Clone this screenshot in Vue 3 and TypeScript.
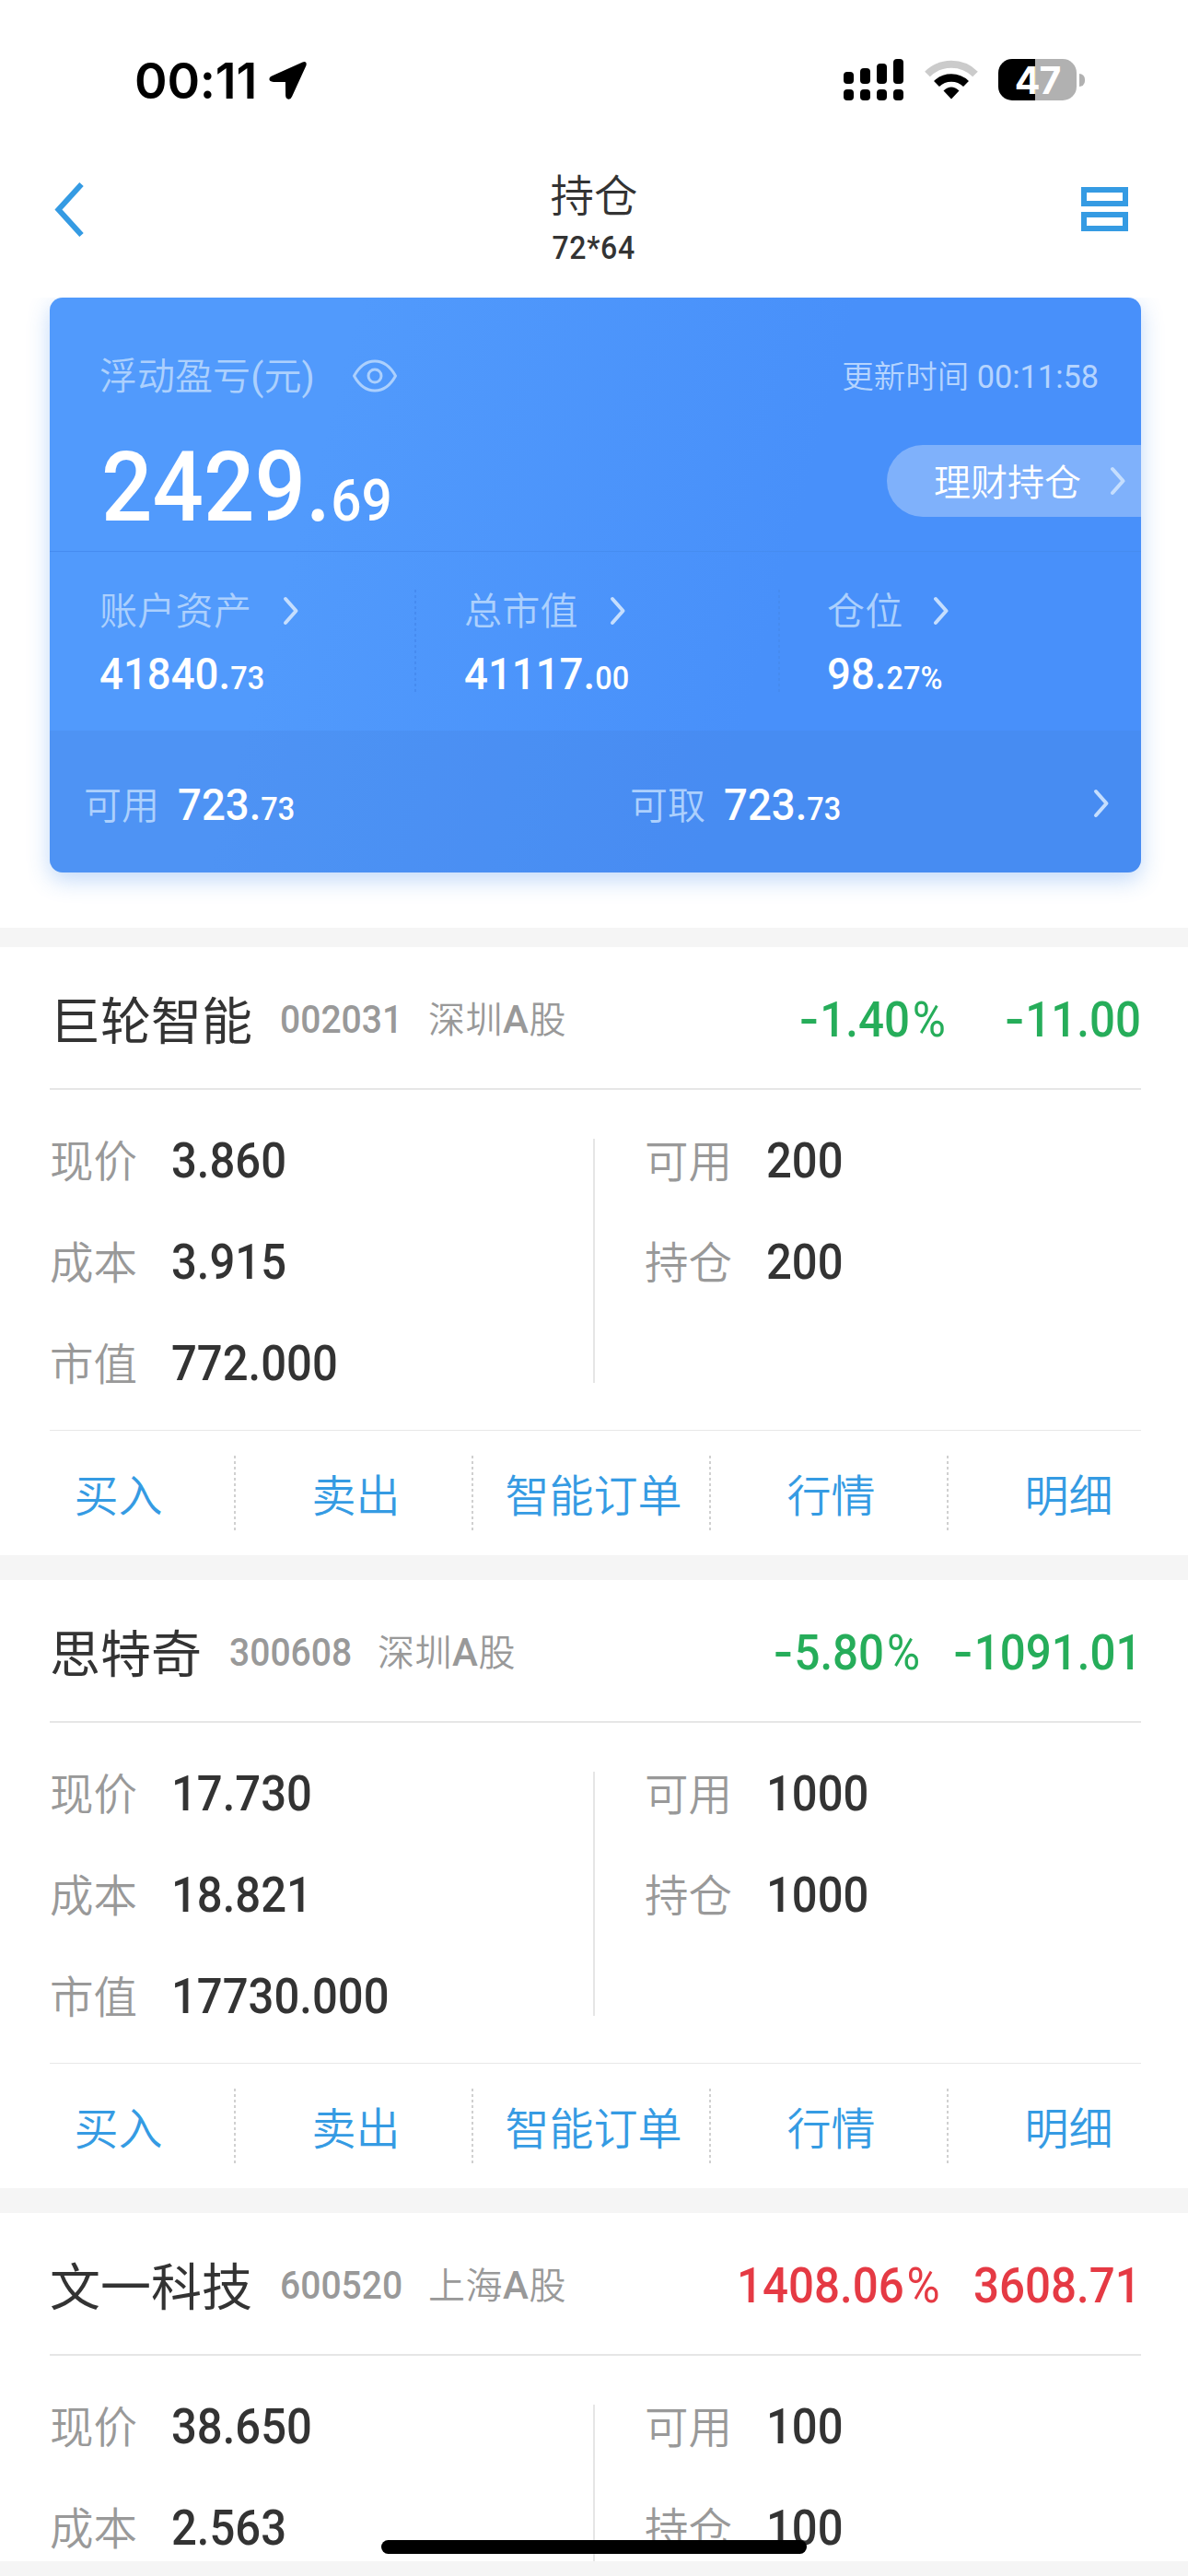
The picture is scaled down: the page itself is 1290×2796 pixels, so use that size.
<script setup lang="ts">
interface Stat { label: string; whole: string; fraction: string }
interface Field { label: string; value: string }
interface Holding {
  name: string
  code: string
  market: string
  sign: string
  percent: string
  amount: string
  trend: 'up' | 'down'
  left: Field[]
  right: Field[]
  clipped?: boolean
}

const stats: Stat[] = [
  { label: '账户资产', whole: '41840.', fraction: '73' },
  { label: '总市值', whole: '41117.', fraction: '00' },
  { label: '仓位', whole: '98.', fraction: '27%' },
]

const actions: string[] = ['买入', '卖出', '智能订单', '行情', '明细']

function fields(price: string, cost: string, value?: string): Field[] {
  const list: Field[] = [
    { label: '现价', value: price },
    { label: '成本', value: cost },
  ]
  if (value) list.push({ label: '市值', value })
  return list
}

function amounts(count: string): Field[] {
  return [
    { label: '可用', value: count },
    { label: '持仓', value: count },
  ]
}

const holdings: Holding[] = [
  { name: '巨轮智能', code: '002031', market: '深圳', sign: '-', percent: '1.40', amount: '11.00', trend: 'down', left: fields('3.860', '3.915', '772.000'), right: amounts('200') },
  { name: '思特奇', code: '300608', market: '深圳', sign: '-', percent: '5.80', amount: '1091.01', trend: 'down', left: fields('17.730', '18.821', '17730.000'), right: amounts('1000') },
  { name: '文一科技', code: '600520', market: '上海', sign: '', percent: '1408.06', amount: '3608.71', trend: 'up', left: fields('38.650', '2.563'), right: amounts('100'), clipped: true },
]
</script>

<template>
  <div class="screen">
    <div class="status">
      <div class="clock">
        <span>00:11</span>
        <svg width="44" height="44" viewBox="0 0 44 44"><path d="M38 3.500 4.500 18.500 Q1.500 20 3 22 Q4 22.800 6 22.800 L20 23 20.200 38.500 Q20.300 41.500 22.500 41.600 24.200 41.500 25.200 39 L40.500 5.500 Q41.300 2.200 38 3.500Z" fill="#000" stroke="#000" stroke-width="2.200" stroke-linejoin="round" /></svg>
      </div>
      <div class="indicators">
        <svg width="66" height="46" viewBox="0 0 66 46">
          <rect x="0" y="14" width="11" height="13" rx="4" /><rect x="18" y="10" width="11" height="17" rx="4" />
          <rect x="36" y="5" width="11" height="22" rx="4" /><rect x="54" y="0" width="11" height="27" rx="4" />
          <rect v-for="i in 4" :key="i" :x="(i - 1) * 18" y="33" width="11" height="12" rx="4" />
        </svg>
        <svg class="wifi" width="58" height="44" viewBox="0 0 58 44">
          <path d="M3 15.500 A37 37 0 0 1 55 15.500" fill="none" stroke="#cbcbcb" stroke-width="8" />
          <path d="M13 26 A23 23 0 0 1 45 26" fill="none" stroke="#000" stroke-width="8.500" />
          <path d="M20.500 33.500 Q29 25.500 37.500 33.500 L29 42.500Z" />
        </svg>
        <div class="battery"><span>47</span></div>
        <div class="nub"></div>
      </div>
    </div>

    <header class="nav">
      <svg class="back" width="40" height="60" viewBox="0 0 40 60"><path d="M32.500 4 7.500 31.500 32.500 59" transform="translate(0 -1)" fill="none" stroke="#359be3" stroke-width="6" /></svg>
      <div class="heading">
        <div class="title">持仓</div>
        <div class="account"><span class="num">72*64</span></div>
      </div>
      <svg class="list" width="51" height="49" viewBox="0 0 51 49" fill="none" stroke="#359be3" stroke-width="6"><rect x="3" y="3" width="45" height="15" /><rect x="3" y="30" width="45" height="15" /></svg>
    </header>

    <section class="card">
      <div class="top">
        <div class="line">
          <span class="label pnl">浮动盈亏<i>(</i>元<i>)</i></span>
          <svg class="eye" width="50" height="38" viewBox="0 0 50 38" fill="none" stroke="#acd0fd" stroke-width="3"><path d="M2.500 19 C8 9 16 3 25 3 S42 9 47.500 19 C42 29 34 35 25 35 S8 29 2.500 19Z" /><circle cx="25" cy="19" r="7" /></svg>
          <span class="updated">更新时间 <span class="clock-value">00:11:58</span></span>
        </div>
        <div class="total">
          <span class="num big">2429.<small>69</small></span>
          <div class="pill">
            <span>理财持仓</span>
            <svg width="20" height="32" viewBox="0 0 20 32"><path d="M4 3 15.500 16 4 29" /></svg>
          </div>
        </div>
      </div>
      <div class="stats">
        <div v-for="s in stats" :key="s.label" class="stat">
          <div class="label">{{ s.label }}<svg width="20" height="32" viewBox="0 0 20 32"><path d="M4 3 15.500 16 4 29" /></svg></div>
          <div class="value"><span class="num">{{ s.whole }}<small>{{ s.fraction }}</small></span></div>
        </div>
      </div>
      <div class="cash">
        <div v-for="l in ['可用', '可取']" :key="l" class="cash-item"><span class="label">{{ l }}</span><span class="value num">723.<small>73</small></span></div>
        <svg width="20" height="32" viewBox="0 0 20 32"><path d="M4 3 15.500 16 4 29" /></svg>
      </div>
    </section>

    <article v-for="h in holdings" :key="h.code" class="holding" :class="{ clipped: h.clipped }">
      <div class="head">
        <span class="name">{{ h.name }}</span>
        <span class="code"><span class="num">{{ h.code }}</span></span>
        <span class="market">{{ h.market }}<b>A</b>股</span>
        <div class="profit num" :class="h.trend">
          <span><span v-if="h.sign" class="sign">{{ h.sign }}</span>{{ h.percent }}<span class="pct">%</span></span>
          <span class="amount"><span v-if="h.sign" class="sign">{{ h.sign }}</span>{{ h.amount }}</span>
        </div>
      </div>
      <div class="body">
        <div class="col">
          <div v-for="f in h.left" :key="f.label" class="field"><span class="key">{{ f.label }}</span><span class="num">{{ f.value }}</span></div>
        </div>
        <div class="col second">
          <div v-for="f in h.right" :key="f.label" class="field"><span class="key">{{ f.label }}</span><span class="num">{{ f.value }}</span></div>
        </div>
      </div>
      <div v-if="!h.clipped" class="actions"><span v-for="a in actions" :key="a">{{ a }}</span></div>
    </article>
    <div class="home-bar"></div>
  </div>
</template>

<style>
html, body { margin: 0; background: #f5f5f5; overflow: hidden; }
</style>

<style scoped>
.screen { position: relative; width: 1290px; height: 2796px; overflow: hidden; background: #f5f5f5; color: #333; font-family: Roboto, "Noto Sans CJK SC", sans-serif; font-weight: 350; }
.screen * { box-sizing: border-box; }
svg { display: block; flex: none; }
.num { display: inline-block; font-weight: 500; transform: scaleX(.93); transform-origin: left center; white-space: nowrap; }

.status { height: 175px; display: flex; justify-content: space-between; background: #fff; padding: 64px 112px 0 146px; color: #000; }
.clock { display: flex; height: 46px; align-items: center; font: 600 54px/46px Inter, sans-serif; letter-spacing: -.2px; gap: 12px; }
.clock span { padding-top: 1px; }
.indicators { display: flex; height: 45px; align-items: center; }
.wifi { margin: 0 22px 0 22px; }
.battery { width: 85px; height: 45px; border-radius: 15px; background: linear-gradient(90deg, #000 40px, #b1b1b1 40px); color: #fff; font: 700 41px/46px Inter, sans-serif; text-align: center; letter-spacing: -1px; }
.nub { width: 6px; height: 14px; margin-left: 3px; border-radius: 0 7px 7px 0; background: #b1b1b1; }

.nav { height: 148px; background: #fff; display: flex; justify-content: space-between; padding: 0 65px 0 56px; }
.back { margin-top: 22px; }
.list { margin-top: 28px; }
.heading { width: 200px; margin-left: 20px; text-align: center; }
.title { font-size: 47.500px; line-height: 79px; }
.account { font-size: 34.500px; line-height: 30px; }
.account .num { transform-origin: center; letter-spacing: .7px; }

.card { margin: 0 51px 0 54px; height: 624px; border-radius: 14px; background: linear-gradient(105deg, #519afc 25%, #4890fa 65%); color: #fff; position: relative; z-index: 1; box-shadow: 0 8px 24px rgba(50, 130, 235, .3), 0 0 0 120px #fff; clip-path: inset(0 -60px -60px -60px); }
.label { color: #acd0fd; font-size: 41px; line-height: 60px; }
.card svg path { fill: none; stroke: #c5defe; stroke-width: 4; stroke-linecap: round; stroke-linejoin: round; }
.card .eye path { stroke: #acd0fd; stroke-width: 3; }
.top { height: 276px; padding-top: 56px; border-bottom: 1px solid #468cf0; }
.line { display: flex; height: 60px; align-items: center; padding: 0 46px 0 54px; }
.pnl i { font-style: normal; font-weight: 400; display: inline-block; width: 14.500px; text-align: center; }
.eye { margin: -2px 0 0 40px; }
.updated { margin-left: auto; font-size: 34.500px; color: #b5d4fe; line-height: 60px; }
.clock-value { font-size: 34.300px; font-weight: 400; }
.total { display: flex; justify-content: space-between; }
.big { margin: 26px 0 -26px 56px; font-size: 105px; line-height: 130px; }
.big small { font-size: 63px; }
.pill { width: 276px; height: 78px; margin-top: 44px; padding: 0 15px 0 51px; border-radius: 39px 0 0 39px; background: rgba(255, 255, 255, .3); display: flex; align-items: center; justify-content: space-between; font-size: 40px; line-height: 78px; }
.pill span { padding-top: 6px; }
.stats { height: 194px; display: flex; }
.stat { width: 395px; padding: 35px 0 0 54px; position: relative; }
.stat + .stat::before { content: ""; position: absolute; left: 1px; top: 41px; width: 2px; height: 112px; background: repeating-linear-gradient(#468bf0 0 3px, transparent 3px 6px); }
.stat .label { display: flex; align-items: center; letter-spacing: .3px; }
.stat svg { margin-left: 33px; margin-top: -3px; }
.stat:nth-child(2) { padding-left: 55px; }
.stat:nth-child(3) svg { margin-left: 31px; }
.value { font-size: 49px; line-height: 66px; }
.stat .value { margin-top: 5px; }
.value small { font-size: 35px; }
.cash { height: 154px; display: flex; background: rgba(70, 130, 220, .27); border-radius: 0 0 14px 14px; padding: 44px 33px 0 37px; align-items: flex-start; }
.cash-item { width: 593px; display: flex; height: 76px; align-items: center; }
.cash-item:nth-child(2) { width: 300px; }
.cash-item .label { width: 102px; }
.cash-item .value { padding-top: 3px; }
.cash svg { margin: 19px 0 0 auto; }

.holding { margin-top: 27px; height: 660px; background: #fff; }
.card + .holding { margin-top: 81px; }
.head { height: 155px; margin: 0 51px 0 54px; padding-top: 4px; border-bottom: 2px solid #e6e6e6; display: flex; align-items: center; }
.name { font-size: 55px; line-height: 70px; padding-top: 4px; font-weight: 400; }
.code { width: 161px; margin-left: 30px; font-size: 42px; color: #999; }
.market { font-size: 40px; line-height: 60px; color: #999; padding-top: 1px; letter-spacing: .5px; }
.market b { font-size: 42px; font-weight: 500; }
.profit { margin-left: auto; display: flex; font-size: 53px; transform-origin: right center; }
.sign { display: inline-block; transform: scaleX(1.25); transform-origin: left center; margin-right: 6px; }
.pct { font-weight: 400; margin: 0 1px 0 3px; }
.amount { min-width: 227px; padding-left: 38px; text-align: right; }
.down { color: #26ad5a; }
.up { color: #e53a44; }
.body { height: 370px; margin: 0 51px 0 54px; display: flex; padding-top: 22px; border-bottom: 1px solid #e8e8e8; }
.col { width: 590px; }
.second { position: relative; padding-left: 56px; }
.second::before { content: ""; position: absolute; left: 0; top: 31px; width: 2px; height: 265px; background: #e6e6e6; }
.field { height: 110px; display: flex; align-items: center; font-size: 53px; line-height: 70px; }
.field .num { transform: scaleX(.925); }
.key { width: 131.500px; font-size: 47.500px; color: #999; padding-top: 4px; }
.clipped { height: 378px; }
.clipped .body { height: 223px; border-bottom: 0; }
.clipped .body .col { height: 201px; }
.clipped .second::before { height: 170px; }
.actions { height: 135px; display: flex; align-items: center; color: #359be3; font-size: 48px; }
.actions span { width: 258px; height: 81px; line-height: 90px; text-align: center; padding-right: 1px; }
.actions span:not(:last-child) { background: repeating-linear-gradient(#d0d0d0 0 3px, transparent 3px 6px) right 2px top / 2px 81px no-repeat; }
.home-bar { position: absolute; left: 414px; top: 2757px; width: 462px; height: 15px; border-radius: 8px; background: #000; }
</style>
